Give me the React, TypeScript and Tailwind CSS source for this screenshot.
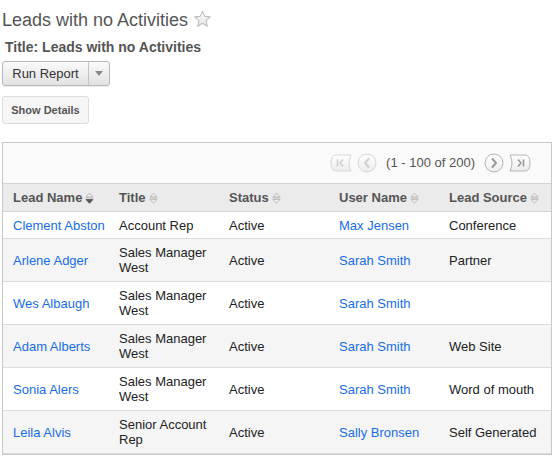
import React from 'react';

type Lead = { name: string; title: string; status: string; user: string; source: string };

const leads: Lead[] = [
  { name: 'Clement Abston', title: 'Account Rep', status: 'Active', user: 'Max Jensen', source: 'Conference' },
  { name: 'Arlene Adger', title: 'Sales Manager West', status: 'Active', user: 'Sarah Smith', source: 'Partner' },
  { name: 'Wes Albaugh', title: 'Sales Manager West', status: 'Active', user: 'Sarah Smith', source: '' },
  { name: 'Adam Alberts', title: 'Sales Manager West', status: 'Active', user: 'Sarah Smith', source: 'Web Site' },
  { name: 'Sonia Alers', title: 'Sales Manager West', status: 'Active', user: 'Sarah Smith', source: 'Word of mouth' },
  { name: 'Leila Alvis', title: 'Senior Account Rep', status: 'Active', user: 'Sally Bronsen', source: 'Self Generated' },
];

function Star() {
  return (
    <svg width="19" height="18" viewBox="0 0 18 17" className="ml-[5px] -mt-[2px]">
      <defs>
        <linearGradient id="sg" x1="0" y1="0" x2="0" y2="1">
          <stop offset="0" stopColor="#ffffff" />
          <stop offset="1" stopColor="#e2e2e2" />
        </linearGradient>
      </defs>
      <path
        d="M9 1.2 L11.2 6 L16.4 6.5 L12.5 10 L13.6 15.3 L9 12.6 L4.4 15.3 L5.5 10 L1.6 6.5 L6.8 6 Z"
        fill="url(#sg)"
        stroke="#bdbdbd"
        strokeWidth="1"
        strokeLinejoin="round"
      />
    </svg>
  );
}

function SortIcon({ active = false }: { active?: boolean }) {
  return (
    <svg width="9" height="12" viewBox="0 0 9 12" className="ml-[3px] inline-block">
      <path d="M1 5 L4.5 1 L8 5 Z" fill="none" stroke="#b4b4b4" strokeWidth="0.8" strokeLinejoin="round" />
      <line x1="0.5" y1="6" x2="8.5" y2="6" stroke="#b4b4b4" strokeWidth="0.8" />
      <path
        d="M1 7.5 L4.5 11.3 L8 7.5 Z"
        fill={active ? '#555' : 'none'}
        stroke={active ? '#555' : '#b4b4b4'}
        strokeWidth="0.8"
        strokeLinejoin="round"
      />
    </svg>
  );
}

function PagerBtn({ kind, disabled }: { kind: 'first' | 'prev' | 'next' | 'last'; disabled?: boolean }) {
  const stroke = disabled ? '#d6d6d6' : '#b5b5b5';
  const glyph = disabled ? '#cfcfcf' : '#9a9a9a';
  if (kind === 'prev' || kind === 'next') {
    return (
      <svg width="20" height="20" viewBox="0 0 20 20">
        <defs>
          <linearGradient id={`pg-${kind}`} x1="0" y1="0" x2="0" y2="1">
            <stop offset="0" stopColor="#ffffff" />
            <stop offset="1" stopColor="#ececec" />
          </linearGradient>
        </defs>
        <circle cx="10" cy="10" r="9" fill={`url(#pg-${kind})`} stroke={stroke} />
        <path
          d={kind === 'prev' ? 'M11.5 6 L8 10 L11.5 14' : 'M8.5 6 L12 10 L8.5 14'}
          fill="none"
          stroke={glyph}
          strokeWidth="2"
          strokeLinecap="round"
          strokeLinejoin="round"
        />
      </svg>
    );
  }
  return (
    <svg width="24" height="18" viewBox="0 0 24 18">
      <defs>
        <linearGradient id={`pg-${kind}`} x1="0" y1="0" x2="0" y2="1">
          <stop offset="0" stopColor="#ffffff" />
          <stop offset="1" stopColor="#ececec" />
        </linearGradient>
      </defs>
      {kind === 'first' ? (
        <>
          <path d="M21 1 Q17 9 21 17 L6 17 Q1 17 1 9 Q1 1 6 1 Z" fill={`url(#pg-${kind})`} stroke={stroke} />
          <line x1="7.5" y1="5.5" x2="7.5" y2="12.5" stroke={glyph} strokeWidth="1.6" />
          <path d="M13 5.5 L10 9 L13 12.5" fill="none" stroke={glyph} strokeWidth="1.6" strokeLinejoin="round" />
        </>
      ) : (
        <>
          <path d="M3 1 Q7 9 3 17 L18 17 Q23 17 23 9 Q23 1 18 1 Z" fill={`url(#pg-${kind})`} stroke={stroke} />
          <path d="M11 5.5 L14 9 L11 12.5" fill="none" stroke={glyph} strokeWidth="1.6" strokeLinejoin="round" />
          <line x1="16.5" y1="5.5" x2="16.5" y2="12.5" stroke={glyph} strokeWidth="1.6" />
        </>
      )}
    </svg>
  );
}

export default function App() {
  return (
    <div className="w-[556px] h-[458px] overflow-hidden bg-white font-['Liberation_Sans',Arial,sans-serif] text-[13px] text-[#222]">
      <div className="pl-[2px] pt-[9px]">
        {/* Page heading */}
        <div className="flex items-center h-[22px]">
          <h1 className="text-[18px] leading-[22px] text-[#555]">Leads with no Activities</h1>
          <Star />
        </div>

        <div className="pl-[3px] mt-[6px] h-[20px] leading-[20px] font-bold text-[#555] text-[14px]">
          Title: Leads with no Activities
        </div>

        {/* Run report split button */}
        <div className="mt-[4px] flex h-[25px] w-[108px] rounded-[3px] border border-[#b8b8b8] bg-gradient-to-b from-[#fafafa] to-[#e2e2e2] shadow-[0_1px_1px_rgba(0,0,0,0.08)]">
          <button className="w-[85px] text-[13px] text-[#333] leading-[23px] text-center">Run Report</button>
          <div className="w-px bg-[#c4c4c4]" />
          <div className="flex-1 flex items-center justify-center">
            <svg width="8" height="5" viewBox="0 0 8 5">
              <path d="M0 0 L8 0 L4 5 Z" fill="#888" />
            </svg>
          </div>
        </div>

        {/* Show details */}
        <button className="mt-[10px] block h-[28px] w-[87px] rounded-[3px] border border-[#dcdcdc] bg-[#f6f6f6] text-[11px] font-bold text-[#555]">
          Show Details
        </button>

        {/* Report table */}
        <div className="mt-[18px] w-[550px] border border-[#c8c8c8]">
          <div className="h-[40px] bg-[#fafafa] flex items-center justify-end pr-[20px] gap-[3px] text-[#555]">
            <PagerBtn kind="first" disabled />
            <PagerBtn kind="prev" disabled />
            <span className="mx-[6px] text-[13px] text-[#555]">(1 - 100 of 200)</span>
            <PagerBtn kind="next" />
            <PagerBtn kind="last" />
          </div>
          <table className="w-full border-collapse table-fixed">
            <colgroup>
              <col className="w-[106px]" />
              <col className="w-[110px]" />
              <col className="w-[110px]" />
              <col className="w-[110px]" />
              <col />
            </colgroup>
            <thead>
              <tr className="h-[28px] bg-[#ebebeb] border-y border-[#d4d4d4] text-left">
                {['Lead Name', 'Title', 'Status', 'User Name', 'Lead Source'].map((h, i) => (
                  <th key={h} className="pl-[10px] font-bold text-[#555] text-[13px] whitespace-nowrap">
                    {h}
                    <SortIcon active={i === 0} />
                  </th>
                ))}
              </tr>
            </thead>
            <tbody>
              {leads.map((l, i) => (
                <tr
                  key={l.name}
                  className={`${i === 0 ? 'h-[27px]' : 'h-[43px]'} ${i % 2 === 1 ? 'bg-[#f5f5f5]' : 'bg-white'} border-b border-[#dcdcdc]`}
                >
                  <td className="pl-[10px] text-[#176de5] leading-[15px]">{l.name}</td>
                  <td className="pl-[10px] pr-[6px] leading-[15px]">{l.title}</td>
                  <td className="pl-[10px] leading-[15px]">{l.status}</td>
                  <td className="pl-[10px] text-[#176de5] leading-[15px]">{l.user}</td>
                  <td className="pl-[10px] leading-[15px] whitespace-nowrap">{l.source}</td>
                </tr>
              ))}
            </tbody>
          </table>
        </div>
      </div>
    </div>
  );
}
